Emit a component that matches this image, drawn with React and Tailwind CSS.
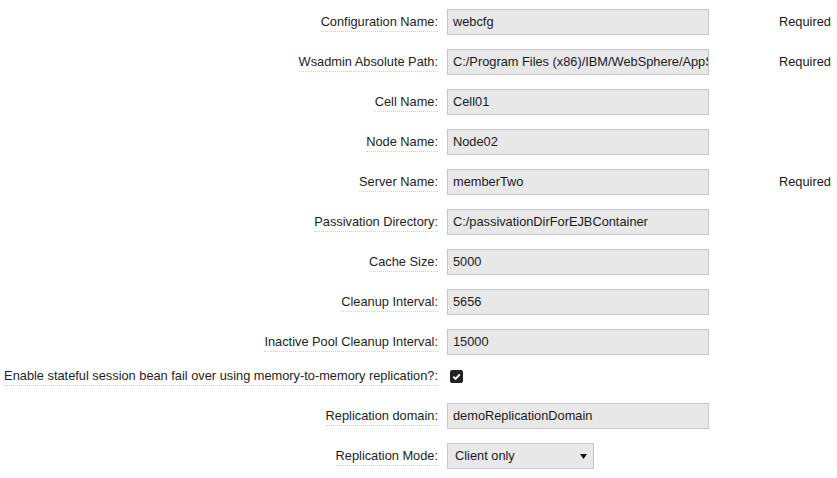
const rows = [
  { label: 'Configuration Name:', value: 'webcfg', required: true },
  { label: 'Wsadmin Absolute Path:', value: 'C:/Program Files (x86)/IBM/WebSphere/AppServer', required: true },
  { label: 'Cell Name:', value: 'Cell01' },
  { label: 'Node Name:', value: 'Node02' },
  { label: 'Server Name:', value: 'memberTwo', required: true },
  { label: 'Passivation Directory:', value: 'C:/passivationDirForEJBContainer' },
  { label: 'Cache Size:', value: '5000' },
  { label: 'Cleanup Interval:', value: '5656' },
  { label: 'Inactive Pool Cleanup Interval:', value: '15000' },
];

function Label({ children }) {
  return (
    <div className="w-[438px] shrink-0 text-right whitespace-nowrap">
      <span className="border-b border-dotted border-[#d0d0d0] pb-[2px]">{children}</span>
    </div>
  );
}

function TextRow({ label, value, required }) {
  return (
    <div className="flex items-center h-10">
      <Label>{label}</Label>
      <div className="ml-[9px] w-[262px] h-[26px] shrink-0 bg-[#e8e8e9] border border-[#c5c6cf] flex items-center px-[5px] overflow-hidden whitespace-nowrap text-[#1a1a1a]">
        {value}
      </div>
      {required && <span className="ml-[70px] text-[#1a1a1a]">Required</span>}
    </div>
  );
}

export default function App() {
  return (
    <div
      className="w-[837px] h-[478px] bg-white text-[12.8px] text-[#1e1e1e] pt-[2px] overflow-hidden"
      style={{ fontFamily: '"Liberation Sans", Arial, sans-serif' }}
    >
      {rows.map(r => (
        <TextRow key={r.label} {...r} />
      ))}

      <div className="flex items-center h-[34px] pb-[6px]">
        <Label>Enable stateful session bean fail over using memory-to-memory replication?:</Label>
        <div className="ml-[12px] w-[13px] h-[13px] bg-[#222] rounded-[2px] flex items-center justify-center">
          <svg width="9" height="9" viewBox="0 0 10 10">
            <path d="M1.5 5.2 L4 7.6 L8.6 2.6" fill="none" stroke="#fff" strokeWidth="2" />
          </svg>
        </div>
      </div>

      <TextRow label="Replication domain:" value="demoReplicationDomain" />

      <div className="flex items-center h-10">
        <Label>Replication Mode:</Label>
        <div className="ml-[9px] w-[147px] h-[26px] bg-[#e8e8e9] border border-[#c5c6cf] flex items-center justify-between pl-[7px] pr-[6px] text-[#1a1a1a]">
          <span>Client only</span>
          <svg width="7" height="5" viewBox="0 0 7 5">
            <path d="M0 0 H7 L3.5 5 Z" fill="#111" />
          </svg>
        </div>
      </div>
    </div>
  );
}
